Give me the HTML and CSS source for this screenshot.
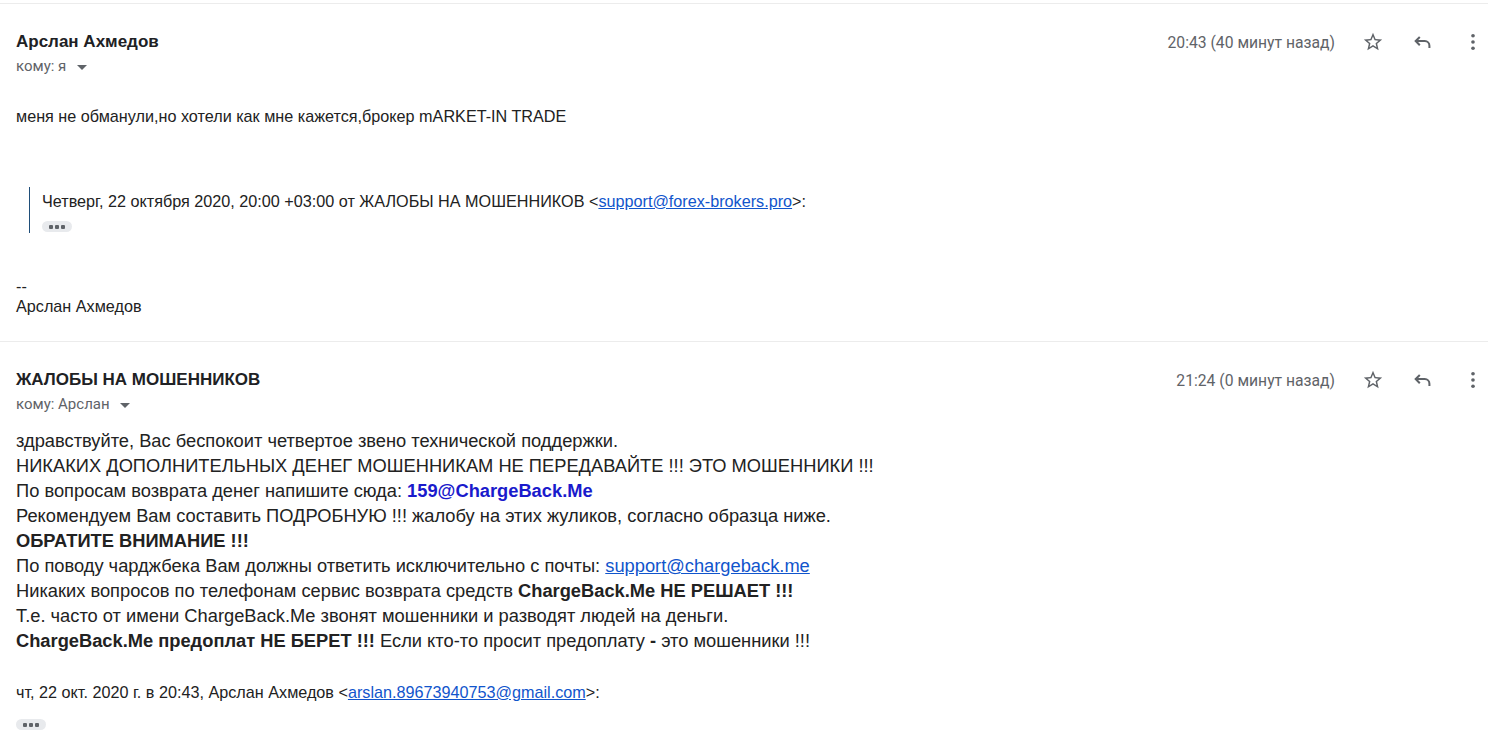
FILE: index.html
```html
<!DOCTYPE html>
<html lang="ru">
	<head>
		<title>Переписка</title>
		<meta charset="utf-8">
		<link rel="stylesheet" href="styles.css">
	</head>

	<body>

	<div class="thread">

		<!-- first message -->
		<div class="message">
			<div class="msg-head">
				<div class="sender">
					<div class="sender-name">Арслан Ахмедов</div>
					<div class="recipient">кому: я <span class="caret"></span></div>
				</div>
				<div class="msg-meta">
					<span class="msg-time">20:43 (40 минут назад)</span>
					<span class="icon-btn">
						<svg width="22" height="22" viewBox="0 0 24 24"><path fill="#5f6368" d="M22 9.24l-7.19-.62L12 2 9.19 8.63 2 9.24l5.46 4.73L5.82 21 12 17.27 18.18 21l-1.63-7.03L22 9.24zM12 15.4l-3.76 2.27 1-4.28-3.32-2.88 4.38-.38L12 6.1l1.71 4.04 4.38.38-3.32 2.88 1 4.28L12 15.4z"/></svg>
					</span>
					<span class="icon-btn">
						<svg width="22" height="22" viewBox="0 0 24 24"><path fill="none" stroke="#5f6368" stroke-width="2.2" d="M8.5 6.5L4 11l4.5 4.5M4 11h10a5 5 0 0 1 5 5v2.5"/></svg>
					</span>
					<span class="icon-btn">
						<svg width="20" height="20" viewBox="0 0 24 24"><circle cx="12" cy="4.5" r="2.2" fill="#5f6368"/><circle cx="12" cy="12" r="2.2" fill="#5f6368"/><circle cx="12" cy="19.5" r="2.2" fill="#5f6368"/></svg>
					</span>
				</div>
			</div>

			<div class="msg-body">
				<p>меня не обманули,но хотели как мне кажется,брокер mARKET-IN TRADE</p>

				<blockquote class="quote">
					<div>Четверг, 22 октября 2020, 20:00 +03:00 от ЖАЛОБЫ НА МОШЕННИКОВ &lt;<a href="#">support@forex-brokers.pro</a>&gt;:</div>
					<span class="more"><svg width="16" height="4" viewBox="0 0 16 4"><rect x="0" y="0" width="4" height="4" rx="1" fill="#5f6368"/><rect x="6" y="0" width="4" height="4" rx="1" fill="#5f6368"/><rect x="12" y="0" width="4" height="4" rx="1" fill="#5f6368"/></svg></span>
				</blockquote>

				<div class="signature">
					<div>--</div>
					<div>Арслан Ахмедов</div>
				</div>
			</div>
		</div>

		<!-- second message -->
		<div class="message">
			<div class="msg-head">
				<div class="sender">
					<div class="sender-name">ЖАЛОБЫ НА МОШЕННИКОВ</div>
					<div class="recipient">кому: Арслан <span class="caret"></span></div>
				</div>
				<div class="msg-meta">
					<span class="msg-time">21:24 (0 минут назад)</span>
					<span class="icon-btn">
						<svg width="22" height="22" viewBox="0 0 24 24"><path fill="#5f6368" d="M22 9.24l-7.19-.62L12 2 9.19 8.63 2 9.24l5.46 4.73L5.82 21 12 17.27 18.18 21l-1.63-7.03L22 9.24zM12 15.4l-3.76 2.27 1-4.28-3.32-2.88 4.38-.38L12 6.1l1.71 4.04 4.38.38-3.32 2.88 1 4.28L12 15.4z"/></svg>
					</span>
					<span class="icon-btn">
						<svg width="22" height="22" viewBox="0 0 24 24"><path fill="none" stroke="#5f6368" stroke-width="2.2" d="M8.5 6.5L4 11l4.5 4.5M4 11h10a5 5 0 0 1 5 5v2.5"/></svg>
					</span>
					<span class="icon-btn">
						<svg width="20" height="20" viewBox="0 0 24 24"><circle cx="12" cy="4.5" r="2.2" fill="#5f6368"/><circle cx="12" cy="12" r="2.2" fill="#5f6368"/><circle cx="12" cy="19.5" r="2.2" fill="#5f6368"/></svg>
					</span>
				</div>
			</div>

			<div class="msg-body body-text">
				<div>здравствуйте, Вас беспокоит четвертое звено технической поддержки.</div>
				<div>НИКАКИХ ДОПОЛНИТЕЛЬНЫХ ДЕНЕГ МОШЕННИКАМ НЕ ПЕРЕДАВАЙТЕ !!! ЭТО МОШЕННИКИ !!!</div>
				<div>По вопросам возврата денег напишите сюда: <b class="cb-mail">159@ChargeBack.Me</b></div>
				<div>Рекомендуем Вам составить ПОДРОБНУЮ !!! жалобу на этих жуликов, согласно образца ниже.</div>
				<div><b>ОБРАТИТЕ ВНИМАНИЕ !!!</b></div>
				<div>По поводу чарджбека Вам должны ответить исключительно с почты: <a href="#">support@chargeback.me</a></div>
				<div>Никаких вопросов по телефонам сервис возврата средств <b>ChargeBack.Me НЕ РЕШАЕТ !!!</b></div>
				<div>Т.е. часто от имени ChargeBack.Me звонят мошенники и разводят людей на деньги.</div>
				<div><b>ChargeBack.Me предоплат НЕ БЕРЕТ !!!</b> Если кто-то просит предоплату <b>-</b> это мошенники !!!</div>

				<div class="reply-line">чт, 22 окт. 2020 г. в 20:43, Арслан Ахмедов &lt;<a href="#">arslan.89673940753@gmail.com</a>&gt;:</div>
				<span class="more"><svg width="16" height="4" viewBox="0 0 16 4"><rect x="0" y="0" width="4" height="4" rx="1" fill="#5f6368"/><rect x="6" y="0" width="4" height="4" rx="1" fill="#5f6368"/><rect x="12" y="0" width="4" height="4" rx="1" fill="#5f6368"/></svg></span>
			</div>
		</div>

	</div>

	</body>
</html>
```

FILE: styles.css
```css
body {
	margin: 0;
	background-color: #fff;
	font-family: 'Liberation Sans', Arial, sans-serif;
	color: #222;
}

a {
	color: #15c;
}

.thread {
	width: 1488px;
	padding-top: 3px;
}

.message {
	border-top: solid #ececec 1px;
	padding: 0 16px;
}

/* header row */
.msg-head {
	display: flex;
	justify-content: space-between;
	align-items: flex-start;
	padding-top: 28px;
}

.sender-name {
	font-weight: bold;
	font-size: 17px;
	line-height: 20px;
	color: #202124;
}

.recipient {
	font-family: Roboto, sans-serif;
	font-size: 15px;
	line-height: 20px;
	margin-top: 4px;
	color: #5f6368;
}

.caret {
	display: inline-block;
	width: 0;
	height: 0;
	margin-left: 7px;
	vertical-align: middle;
	border-left: 5px solid transparent;
	border-right: 5px solid transparent;
	border-top: 5px solid #5f6368;
}

.msg-meta {
	display: flex;
	align-items: center;
	margin-right: -26px;
	margin-top: -6px;
}

.msg-time {
	font-family: Roboto, sans-serif;
	font-size: 15.7px;
	color: #5f6368;
	margin-right: 13px;
}

.icon-btn {
	display: flex;
	align-items: center;
	justify-content: center;
	width: 50px;
	height: 32px;
}

/* bodies */
.msg-body {
	font-size: 16.2px;
}

.msg-body p {
	margin: 30px 0 0;
	line-height: 20px;
}

.quote {
	margin: 61px 0 0 13px;
	padding: 4px 0 1px 12px;
	border-left: solid #1f4e79 1px;
	line-height: 20px;
	font-size: 16.2px;
}

.more {
	display: flex;
	align-items: center;
	justify-content: center;
	width: 30px;
	height: 11px;
	background-color: #e8eaed;
	border-radius: 6px;
}

.quote .more {
	margin-top: 10px;
}

.signature {
	margin-top: 43px;
	padding-bottom: 25px;
	line-height: 20px;
}

.body-text {
	margin-top: 14px;
	font-size: 18.3px;
	line-height: 25px;
}

.cb-mail {
	color: #1a1acc;
}

.reply-line {
	margin-top: 29px;
	font-size: 16.2px;
	line-height: 20px;
}

.body-text .more {
	margin-top: 17px;
}
```
